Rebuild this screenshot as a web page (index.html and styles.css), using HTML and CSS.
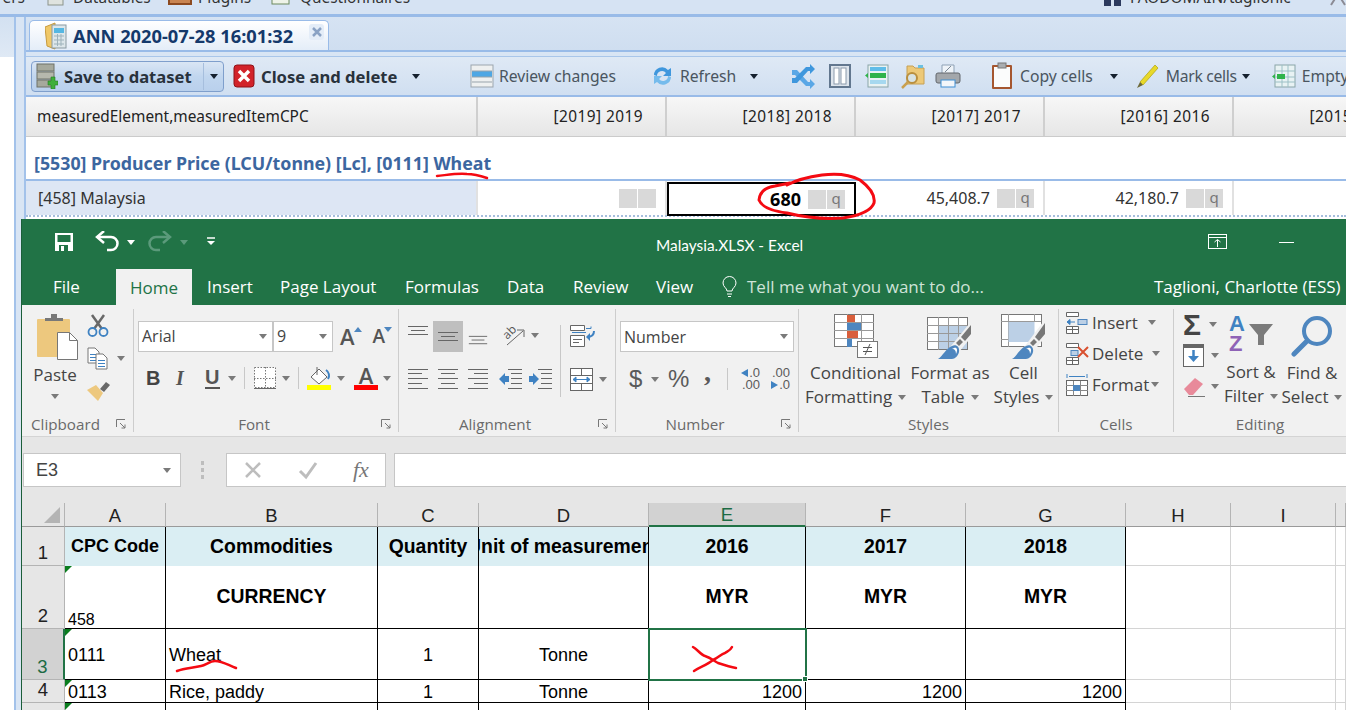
FILE: index.html
```html
<!DOCTYPE html>
<html lang="en">
<head>
<meta charset="utf-8">
<title>ANN 2020-07-28 - Malaysia.XLSX</title>
<link rel="stylesheet" href="styles.css">
</head>
<body>
<header class="topbar">
  <span class="tn tn-a">ers</span>
  <span class="tn tn-b"><svg width="17" height="14" viewBox="0 0 17 14"><rect x="1" y="0" width="15" height="13" fill="#dfe3df" stroke="#8b948b"/></svg>Datatables</span>
  <span class="tn tn-c"><svg width="24" height="14" viewBox="0 0 24 14"><rect x="1" y="0" width="22" height="12" fill="#c98552" stroke="#8d4a20" stroke-width="2"/></svg>Plugins</span>
  <span class="tn tn-d"><svg width="20" height="14" viewBox="0 0 20 14"><rect x="2" y="0" width="17" height="12" fill="#eef3e8" stroke="#6d8a5f"/></svg>Questionnaires</span>
  <span class="tn tn-e"><svg width="20" height="14" viewBox="0 0 20 14"><path d="M1 14V6h7v8zM11 14V6h7v8z" fill="#2c3a5e"/><circle cx="9.500" cy="3" r="3" fill="#2c3a5e"/></svg>FAODOMAIN/taglionic</span>
  <span class="tn tn-f"><svg width="16" height="14" viewBox="0 0 16 14"><path d="M1 13 8 2l7 11" fill="none" stroke="#8b8b95" stroke-width="2"/></svg></span>
</header>

<div class="shell">
  <aside class="west"><div class="west-head"></div></aside>
  <div class="splitter"></div>
  <main class="center">
    <div class="tabstrip">
      <div class="tab">
        <svg width="22" height="28" viewBox="0 0 22 28"><path d="M0 5 10 1v26L2 24z" fill="#f0c868" stroke="#c79a3e"/><rect x="7" y="3" width="14" height="23" fill="#dce6ea" stroke="#8a9aa2"/><rect x="9" y="6" width="10" height="5" fill="#55b7e2"/><path d="M9 14h10M9 18h10M9 22h10M12.500 12v12M16 12v12" stroke="#9db2bb"/></svg>
        <span class="tab-title">ANN 2020-07-28 16:01:32</span>
        <span class="tab-close"><svg width="10" height="10" viewBox="0 0 10 10"><path d="M1 1 9 9M9 1 1 9" stroke="#8aa2c4" stroke-width="2.500"/></svg></span>
      </div>
    </div>
    <div class="tabgap"></div>
    <div class="toolbar">
      <div class="savebtn">
        <svg width="22" height="26" viewBox="0 0 22 26"><rect x="1" y="1" width="17" height="7" fill="#a6a99c" stroke="#6f7268"/><rect x="1" y="9" width="17" height="7" fill="#b6b8ad" stroke="#6f7268"/><rect x="1" y="17" width="17" height="7" fill="#a6a99c" stroke="#6f7268"/><path d="M15 14h4v4h3v4h-3v4h-4v-4h-3v-4h3z" fill="#3fae3a" stroke="#257d22" stroke-width=".6"/></svg>
        <span class="boldtxt sv">Save to dataset</span>
        <i class="btnsep"></i>
        <i class="tri-d dark"></i>
      </div>
      <svg class="m9" width="22" height="26" viewBox="0 0 22 26"><rect x="1" y="2" width="20" height="22" rx="3" fill="#d2232a" stroke="#8f1218"/><path d="M6 8 16 18M16 8 6 18" stroke="#fff" stroke-width="3.500"/></svg>
      <span class="boldtxt cd">Close and delete</span>
      <i class="tri-d dark m15"></i>
      <svg class="m50" width="24" height="26" viewBox="0 0 24 26"><rect x="1" y="2" width="22" height="22" fill="#eef0f0" stroke="#9ba5ad"/><rect x="2" y="8" width="20" height="6" fill="#4ea7e4"/><path d="M2 8h20M2 14h20M2 19h20" stroke="#98a3ab"/></svg>
      <span class="tbtxt t-review">Review changes</span>
      <svg class="m35" width="23" height="26" viewBox="0 0 23 26"><path d="M3 12a8 8 0 0 1 14-5l3-2v8h-8l3-3a5 5 0 0 0-9 3z" fill="#3f97dd"/><path d="M20 14a8 8 0 0 1-14 5l-3 2v-8h8l-3 3a5 5 0 0 0 9-3z" fill="#75bbec"/></svg>
      <span class="tbtxt t-refresh">Refresh</span>
      <i class="tri-d dark m15"></i>
      <svg class="m33" width="25" height="26" viewBox="0 0 25 26"><path d="M1 7h5l11 12h2v-3l5 5-5 5v-3h-4L4 12H1z" fill="#5aa7e6"/><path d="M1 20h5L17 8h2v3l5-5-5-5v3h-4L4 15H1z" fill="#3f97dd"/></svg>
      <svg class="m13" width="22" height="24" viewBox="0 0 22 24"><rect x="1" y="1" width="20" height="22" fill="#dde4ec" stroke="#62778f" stroke-width="2"/><rect x="5" y="4" width="5" height="16" fill="#fff" stroke="#8b9aab"/><rect x="12" y="4" width="5" height="16" fill="#fff" stroke="#8b9aab"/></svg>
      <svg class="m14" width="24" height="24" viewBox="0 0 24 24"><rect x="3" y="1" width="20" height="22" fill="#e8f2f3" stroke="#8aa5a8"/><rect x="5" y="3" width="16" height="4" fill="#60bde9"/><rect x="5" y="16" width="16" height="4" fill="#a6d8ef"/><rect x="5" y="9" width="16" height="5" fill="#2fb34a"/><path d="M0 11.500 3 9v5z" fill="#2fb34a"/></svg>
      <svg class="m12" width="24" height="26" viewBox="0 0 24 26"><path d="M6 3h6l2 2h9v16H6z" fill="#edc978" stroke="#c6a055"/><rect x="17" y="2" width="5" height="3" fill="#6cc0e0"/><circle cx="11" cy="15" r="5" fill="#d8e3e4" stroke="#b98f3f" stroke-width="2"/><path d="M7 19 1 25" stroke="#c9a050" stroke-width="2.500"/></svg>
      <svg class="m10" width="26" height="26" viewBox="0 0 26 26"><path d="M7 2h12v9H7z" fill="#eef3f8" stroke="#8ea1b5"/><path d="M10 9l6-6" stroke="#7c8894"/><rect x="1" y="10" width="24" height="10" rx="2" fill="#a3a7ab" stroke="#62676c"/><rect x="6" y="17" width="14" height="7" fill="#f3f6fa" stroke="#3f8fd4"/></svg>
      <svg class="m30" width="22" height="28" viewBox="0 0 22 28"><rect x="1" y="3" width="20" height="24" rx="1" fill="#a5562f"/><rect x="3" y="5" width="16" height="20" fill="#fbfcfc"/><rect x="7" y="1" width="8" height="5" fill="#a9adb0" stroke="#777"/></svg>
      <span class="tbtxt t-copy">Copy cells</span>
      <i class="tri-d dark m17"></i>
      <svg class="m18" width="23" height="26" viewBox="0 0 23 26"><path d="M4 19 19 2l3 3L7 22z" fill="#e8d92a" stroke="#b5a81a" stroke-width=".8"/><path d="M4 19 1 25l6-3z" fill="#6d6a3a"/></svg>
      <span class="tbtxt t-mark">Mark cells</span>
      <i class="tri-d dark m5"></i>
      <svg class="m22" width="24" height="24" viewBox="0 0 24 24"><rect x="3" y="1" width="20" height="22" fill="#e8f2f3" stroke="#8aa5a8"/><path d="M3 7h20M3 13h20M3 18h20M10 1v22M16 1v22" stroke="#9cc0c6"/><rect x="5" y="10" width="8" height="5" fill="#2fb34a"/><path d="M0 12.500 3 10v5z" fill="#2fb34a"/></svg>
      <span class="tbtxt t-empty">Empty</span>
    </div>
    <div class="bluebar"></div>
    <div class="gridhead">
      <div class="gh gh-first">measuredElement,measuredItemCPC</div>
      <div class="gh">[2019] 2019</div>
      <div class="gh">[2018] 2018</div>
      <div class="gh">[2017] 2017</div>
      <div class="gh">[2016] 2016</div>
      <div class="gh">[2015] 2015</div>
    </div>
    <div class="grouprow">[5530] Producer Price (LCU/tonne) [Lc], [0111] Wheat</div>
    <div class="bluebar"></div>
    <div class="datarow">
      <div class="dc dc-first">[458] Malaysia</div>
      <div class="dc"><i class="flag"></i><i class="flag"></i></div>
      <div class="dc dc-sel"><b>680</b><i class="flag fl-l"></i><i class="flag">q</i></div>
      <div class="dc">45,408.7<i class="flag fl-l"></i><i class="flag">q</i></div>
      <div class="dc">42,180.7<i class="flag fl-l"></i><i class="flag">q</i></div>
      <div class="dc">50,000.0</div>
    </div>
  </main>
</div>

<section class="excel">
  <div class="titlebar">
    <svg class="qa-save" width="20" height="20" viewBox="0 0 20 20"><path d="M1 1h18v18H1z" fill="#fff"/><rect x="3.500" y="3" width="13" height="7" fill="#217346"/><rect x="5" y="13" width="9" height="6" fill="#217346"/><rect x="7" y="14" width="3" height="5" fill="#fff"/></svg>
    <svg class="qa-undo" width="24" height="22" viewBox="0 0 24 22"><path d="M2 6h14a6 6 0 0 1 0 13h-4" fill="none" stroke="#fff" stroke-width="2.500"/><path d="M9 0 2 6l7 6" fill="none" stroke="#fff" stroke-width="2.500"/></svg>
    <i class="tri-d white qa-c1"></i>
    <svg class="qa-redo" width="24" height="22" viewBox="0 0 24 22"><path d="M22 6H8a6 6 0 0 0 0 13h4" fill="none" stroke="#5b9a7b" stroke-width="2.500"/><path d="M15 0l7 6-7 6" fill="none" stroke="#5b9a7b" stroke-width="2.500"/></svg>
    <i class="tri-d faded qa-c2"></i>
    <svg class="qa-more" width="8" height="10" viewBox="0 0 8 10"><path d="M0 1h8" stroke="#fff" stroke-width="1.500"/><path d="M0 4h8L4 8z" fill="#fff"/></svg>
    <span class="doc-title">Malaysia.XLSX - Excel</span>
    <svg class="win-opt" width="20" height="16" viewBox="0 0 20 16"><rect x=".5" y=".5" width="18" height="14" fill="none" stroke="#fff"/><path d="M1 3.500h18M9.500 13V6M6.500 8l3-2.500 3 2.500" fill="none" stroke="#fff"/></svg>
    <i class="win-min"></i>
  </div>
  <nav class="tabs">
    <span class="rt rt-file">File</span>
    <span class="rt rt-home">Home</span>
    <span class="rt rt-insert">Insert</span>
    <span class="rt rt-page">Page Layout</span>
    <span class="rt rt-form">Formulas</span>
    <span class="rt rt-data">Data</span>
    <span class="rt rt-rev">Review</span>
    <span class="rt rt-view">View</span>
    <svg class="bulb" width="15" height="22" viewBox="0 0 15 22"><path d="M5 15c0-3-4-4-4-8a6.500 6.500 0 0 1 13 0c0 4-4 5-4 8z" fill="none" stroke="#fff"/><path d="M5 18h5M6 20.500h3" stroke="#fff"/></svg>
    <span class="rt tell">Tell me what you want to do...</span>
    <span class="rt user">Taglioni, Charlotte (ESS)</span>
  </nav>

  <div class="ribbon">
    <div class="group g-clip">
      <div class="gbody clip-body">
        <div class="paste">
          <svg width="42" height="46" viewBox="0 0 42 46"><rect x="0" y="5" width="33" height="38" rx="1" fill="#edc87e"/><path d="M8 7V4h6V0h6v4h6v3z" fill="#787878"/><path d="M20.500 18.500h12l8 8v19h-20z" fill="#fff" stroke="#767676"/><path d="M32.500 18.500v8h8" fill="none" stroke="#767676"/></svg>
          <span class="paste-t">Paste</span>
          <i class="tri-d gray paste-c"></i>
        </div>
        <div class="clip-small">
          <svg width="22" height="23" viewBox="0 0 22 23"><path d="M5 1l10 14M17 1 7 15" stroke="#686868" stroke-width="2.500"/><circle cx="5.500" cy="18" r="4" fill="none" stroke="#3f82c2" stroke-width="1.800"/><circle cx="16.500" cy="18" r="4" fill="none" stroke="#3f82c2" stroke-width="1.800"/></svg>
          <div class="copyrow">
            <svg width="21" height="23" viewBox="0 0 21 23"><path d="M1 1h7l4 4v11H1z" fill="#fff" stroke="#767676"/><path d="M3 7.500h6M3 10.500h6M3 13.500h6" stroke="#3f82c2"/><path d="M9 7h7l4 4v11H9z" fill="#fff" stroke="#767676"/><path d="M11 13.500h7M11 16.500h7M11 19.500h7" stroke="#3f82c2"/></svg>
            <i class="tri-d gray m9"></i>
          </div>
          <svg width="24" height="22" viewBox="0 0 24 22"><path d="M0 10 9 5l7 8-5 8z" fill="#edc87e"/><path d="M13 9l6-7 4 3-6 7z" fill="#686868"/></svg>
        </div>
      </div>
      <div class="glabel"><span>Clipboard</span><svg class="launch" width="10" height="10" viewBox="0 0 10 10"><path d="M.5 8V.5H9M4 4l5 5M9 5.500V9H5.500" fill="none" stroke="#777"/></svg></div>
    </div>

    <div class="group g-font">
      <div class="gbody font-body">
        <div class="frow1">
          <div class="field f-name">Arial<i class="tri-d gray"></i></div>
          <div class="field f-size">9<i class="tri-d gray"></i></div>
          <span class="growa">A<i class="tri-u blue"></i></span>
          <span class="growb">A<i class="tri-d blue"></i></span>
        </div>
        <div class="frow2">
          <b class="fb">B</b>
          <i class="fi">I</i>
          <span class="fu">U</span>
          <i class="tri-d gray m8"></i>
          <i class="vsep s-a"></i>
          <svg class="m9" width="22" height="22" viewBox="0 0 22 22"><rect x=".5" y=".5" width="21" height="20" fill="#fff" stroke="#777" stroke-dasharray="1.500 1.500"/><path d="M11.500 0v20M0 11.500h22" stroke="#777" stroke-dasharray="1.500 1.500"/><path d="M0 21.500h22" stroke="#666"/></svg>
          <i class="tri-d gray m6"></i>
          <i class="vsep s-b"></i>
          <span class="fillcol">
            <svg width="24" height="19" viewBox="0 0 24 19"><path d="M12 3 20 11l-8 7-8-7z" fill="#fff" stroke="#666"/><path d="M10 1v8" stroke="#666"/><path d="M19 4c3 2 4 6 2 9" fill="none" stroke="#3f82c2" stroke-width="2"/></svg>
            <i class="bar-y"></i>
          </span>
          <i class="tri-d gray m6"></i>
          <span class="colora">A<i class="bar-r"></i></span>
          <i class="tri-d gray m5"></i>
        </div>
      </div>
      <div class="glabel"><span>Font</span><svg class="launch" width="10" height="10" viewBox="0 0 10 10"><path d="M.5 8V.5H9M4 4l5 5M9 5.500V9H5.500" fill="none" stroke="#777"/></svg></div>
    </div>

    <div class="group g-align">
      <div class="gbody align-body">
        <div class="al-left">
          <div class="arow1">
            <svg class="alg t" width="20" height="12" viewBox="0 0 20 12"><path d="M0 1.500h20M3 5.500h14M0 9.500h20" stroke="#666"/></svg>
            <span class="al-on"><svg width="20" height="12" viewBox="0 0 20 12"><path d="M0 1.500h20M3 5.500h14M0 9.500h20" stroke="#666"/></svg></span>
            <svg class="alg b" width="20" height="12" viewBox="0 0 20 12"><path d="M0 1.500h20M3 5.500h14M0 9.500h20" stroke="#666"/></svg>
            <svg class="orient" width="24" height="24" viewBox="0 0 24 24"><text x="1" y="13" transform="rotate(-45 8 10)" class="svgtxt">ab</text><path d="M5 22 21 8M15 7h7v7" fill="none" stroke="#666"/></svg>
            <i class="tri-d gray m5"></i>
          </div>
          <div class="arow2">
            <svg width="20" height="22" viewBox="0 0 20 22"><path d="M0 1.500h20M0 5.500h14M0 10.500h20M0 15.500h14M0 20.500h20" stroke="#666"/></svg>
            <svg width="20" height="22" viewBox="0 0 20 22"><path d="M0 1.500h20M3 5.500h14M0 10.500h20M3 15.500h14M0 20.500h20" stroke="#666"/></svg>
            <svg width="20" height="22" viewBox="0 0 20 22"><path d="M0 1.500h20M6 5.500h14M0 10.500h20M6 15.500h14M0 20.500h20" stroke="#666"/></svg>
            <svg class="ai1" width="23" height="22" viewBox="0 0 23 22"><path d="M9 1.500h14M12 5.500h11M12 10.500h11M12 15.500h11M9 20.500h14" stroke="#666"/><path d="M0 11 6 5v3h4v6H6v3z" fill="#3f82c2"/></svg>
            <svg class="ai2" width="23" height="22" viewBox="0 0 23 22"><path d="M9 1.500h14M12 5.500h11M12 10.500h11M12 15.500h11M9 20.500h14" stroke="#666"/><path d="M10 11 4 5v3H0v6h4v3z" fill="#3f82c2"/></svg>
          </div>
        </div>
        <i class="vsep s-c"></i>
        <div class="al-right">
          <svg width="26" height="22" viewBox="0 0 26 22"><path d="M.5.500h14v5H.5zM.5 10.500h14v11H.5zM3 14.500h9M3 17.500h6" fill="#fff" stroke="#666"/><path d="M16 3.500h5v-2M2 7.500h14" fill="none" stroke="#3f82c2"/><path d="M24 6c0 4-2 6-7 6" fill="none" stroke="#3f82c2" stroke-width="2"/><path d="M20 8l-4 4 4 4z" fill="#3f82c2"/></svg>
          <div class="mergerow">
            <svg width="23" height="23" viewBox="0 0 23 23"><rect x=".5" y=".5" width="22" height="22" fill="#fff" stroke="#666"/><path d="M0 7.500h23M0 15.500h23M11.500 0v7M11.500 16v7" stroke="#666"/><path d="M3 11.500h17M3 11.500l3-2.500v5zM20 11.500l-3-2.500v5z" stroke="#3f82c2" fill="#3f82c2"/></svg>
            <i class="tri-d gray m6"></i>
          </div>
        </div>
      </div>
      <div class="glabel"><span>Alignment</span><svg class="launch" width="10" height="10" viewBox="0 0 10 10"><path d="M.5 8V.5H9M4 4l5 5M9 5.500V9H5.500" fill="none" stroke="#777"/></svg></div>
    </div>

    <div class="group g-num">
      <div class="gbody num-body">
        <div class="field f-num">Number<i class="tri-d gray"></i></div>
        <div class="nrow">
          <span class="nsym dollar">$</span><i class="tri-d gray m9"></i>
          <span class="nsym pct">%</span>
          <span class="nsym comma">,</span>
          <i class="vsep s-d"></i>
          <span class="dec d1"><span><i class="tri-l"></i>.0</span><span>.00</span></span>
          <span class="dec d2"><span>.00</span><span><i class="tri-r"></i>.0</span></span>
        </div>
      </div>
      <div class="glabel"><span>Number</span><svg class="launch" width="10" height="10" viewBox="0 0 10 10"><path d="M.5 8V.5H9M4 4l5 5M9 5.500V9H5.500" fill="none" stroke="#777"/></svg></div>
    </div>

    <div class="group g-styles">
      <div class="gbody sty-body">
        <div class="big b-cond">
          <svg width="46" height="46" viewBox="0 0 46 46"><rect x=".5" y=".5" width="39" height="32" fill="#fff" stroke="#777"/><path d="M0 8.500h40M0 16.500h40M0 24.500h40M13.500 0v33M27.500 0v33" stroke="#999"/><rect x="13" y="1" width="8" height="7" fill="#d95f3c"/><rect x="13" y="9" width="14" height="7" fill="#4e86bf"/><rect x="13" y="17" width="11" height="7" fill="#d95f3c"/><rect x="13" y="25" width="5" height="8" fill="#4e86bf"/><rect x="23.500" y="27.500" width="20" height="16" fill="#fff" stroke="#777"/><path d="M29 33.500h9M29 37.500h9M36 30l-5 11" stroke="#555"/></svg>
          <span class="bigt">Conditional</span><span class="bigt">Formatting<i class="tri-d gray m6"></i></span>
        </div>
        <div class="big b-table">
          <svg width="46" height="46" viewBox="0 0 46 46"><rect x=".5" y="3.500" width="40" height="32" fill="#fff" stroke="#777"/><rect x="11" y="11" width="29" height="24" fill="#bcd0e6"/><path d="M0 11.500h40M0 19.500h40M0 27.500h40M11.500 3v33M21.500 3v33M31.500 3v33" stroke="#999"/><path d="M24 32 42 10l4 3v8L32 38l-8 8H9z" fill="#f1f1f1"/><path d="M44 11v9l-6 7-4-4zM33 25l3 3-4 4-3-3z" fill="#777"/><path d="M11 45c5-3 8-11 14-13 4-2 8 1 7 6-1 4-4 7-7 7z" fill="#4e86bf"/><path d="M27 34c3-1 4 2 2 6 0-3-1-5-4-5z" fill="#fff"/></svg>
          <span class="bigt">Format as</span><span class="bigt">Table<i class="tri-d gray m6"></i></span>
        </div>
        <div class="big b-cell">
          <svg width="46" height="46" viewBox="0 0 46 46"><rect x=".5" y=".5" width="40" height="32" fill="#fff" stroke="#777"/><path d="M0 7.500h40M7.500 0v33M0 25.500h8M33.500 0v8" stroke="#999"/><rect x="7.500" y="8" width="26" height="20" fill="#bcd0e6"/><path d="M24 32 42 8l4 3v10L32 38l-8 8H9z" fill="#f1f1f1"/><path d="M44 9v11l-6 7-4-4zM33 25l3 3-4 4-3-3z" fill="#777"/><path d="M11 45c5-3 8-11 14-13 4-2 8 1 7 6-1 4-4 7-7 7z" fill="#4e86bf"/><path d="M27 34c3-1 4 2 2 6 0-3-1-5-4-5z" fill="#fff"/></svg>
          <span class="bigt">Cell</span><span class="bigt">Styles<i class="tri-d gray m6"></i></span>
        </div>
      </div>
      <div class="glabel"><span>Styles</span></div>
    </div>

    <div class="group g-cells">
      <div class="gbody cel-body">
        <div class="crow">
          <svg width="22" height="22" viewBox="0 0 22 22"><path d="M.5.500h12v4H.5zM.5 14.500h12v7H.5zM6.500 14v8M.5 17.500h12" fill="#fff" stroke="#666"/><rect x="12" y="7.500" width="9" height="5" fill="#bcd0e6" stroke="#4e86bf"/><path d="M1 10h8M1 10l3-2.500v5z" stroke="#3f82c2" fill="#3f82c2"/></svg>
          <span>Insert</span><i class="tri-d gray cr1"></i>
        </div>
        <div class="crow">
          <svg width="24" height="22" viewBox="0 0 24 22"><path d="M.5.500h12v4H.5zM.5 14.500h12v7H.5zM6.500 14v8M.5 17.500h12" fill="#fff" stroke="#666"/><rect x="5" y="7.500" width="7" height="5" fill="#bcd0e6" stroke="#4e86bf"/><path d="M12 4l10 10M22 4 12 14" stroke="#d9502f" stroke-width="2"/></svg>
          <span class="del">Delete</span><i class="tri-d gray cr2"></i>
        </div>
        <div class="crow">
          <svg width="22" height="24" viewBox="0 0 22 24"><path d="M1 1v4M21 1v4M3 3.500h16" stroke="#3f82c2"/><rect x=".5" y="7.500" width="21" height="15" fill="#fff" stroke="#666"/><path d="M0 12.500h22M0 17.500h22M7.500 8v15M14.500 8v15" stroke="#888"/><rect x="7" y="12" width="7" height="6" fill="#4e86bf"/></svg>
          <span>Format</span><i class="tri-d gray cr3"></i>
        </div>
      </div>
      <div class="glabel"><span>Cells</span></div>
    </div>

    <div class="group g-edit">
      <div class="gbody edit-body">
        <div class="ed-small">
          <div class="esr"><span class="sigma">Σ</span><i class="tri-d gray m6"></i></div>
          <div class="esr"><svg width="21" height="23" viewBox="0 0 21 23"><rect x=".5" y=".5" width="20" height="22" fill="#fff" stroke="#666"/><rect x="0" y="0" width="21" height="4" fill="#666"/><path d="M10.500 6v10" stroke="#3f82c2" stroke-width="2.500"/><path d="M5 12l5.500 6 5.500-6z" fill="#3f82c2"/></svg><i class="tri-d gray m7"></i></div>
          <div class="esr"><svg width="22" height="20" viewBox="0 0 22 20"><path d="M1 12 12 1l8 6-10 11H6z" fill="#e88a9a"/><path d="M5 19.500h17" stroke="#777"/></svg><i class="tri-d gray m6"></i></div>
        </div>
        <div class="big b-sort">
          <div class="sorticon"><span class="az"><span class="a">A</span><span class="z">Z</span></span><svg width="24" height="22" viewBox="0 0 24 22"><path d="M0 0h24l-9 11v10H9V11z" fill="#7b7b7b"/></svg></div>
          <span class="bigt">Sort &amp;</span><span class="bigt">Filter<i class="tri-d gray m6"></i></span>
        </div>
        <div class="big b-find">
          <svg width="42" height="42" viewBox="0 0 42 42"><circle cx="26" cy="16" r="13" fill="none" stroke="#4e86bf" stroke-width="4"/><path d="M16 26 3 39" stroke="#4e86bf" stroke-width="5" stroke-linecap="round"/></svg>
          <span class="bigt">Find &amp;</span><span class="bigt">Select<i class="tri-d gray m6"></i></span>
        </div>
      </div>
      <div class="glabel"><span>Editing</span></div>
    </div>
  </div>

  <div class="formula">
    <div class="namebox">E3<i class="tri-d gray"></i></div>
    <span class="fdots"><i></i><i></i><i></i></span>
    <div class="fxbox">
      <svg width="20" height="20" viewBox="0 0 20 20"><path d="M3 3l14 14M17 3 3 17" stroke="#bdbdbd" stroke-width="2.500"/></svg>
      <svg width="20" height="20" viewBox="0 0 20 20"><path d="M2 11l6 6L18 3" fill="none" stroke="#bdbdbd" stroke-width="3"/></svg>
      <span class="fx">fx</span>
    </div>
    <div class="finput"></div>
  </div>

  <div class="sheet">
    <div class="hd corner"><svg width="16" height="16" viewBox="0 0 16 16"><path d="M16 0v16H0z" fill="#b4b4b4"/></svg></div>
    <div class="hd">A</div><div class="hd">B</div><div class="hd">C</div><div class="hd">D</div>
    <div class="hd hd-on">E</div><div class="hd">F</div><div class="hd">G</div><div class="hd">H</div><div class="hd">I</div><div class="hd"></div>

    <div class="rh">1</div>
    <div class="c h1 h1s">CPC Code</div><div class="c h1">Commodities</div><div class="c h1">Quantity</div><div class="c h1">Unit of measurement</div><div class="c h1">2016</div><div class="c h1">2017</div><div class="c h1">2018</div><div class="e"></div><div class="e"></div><div class="e"></div>

    <div class="rh">2</div>
    <div class="c l bot small tri">458</div><div class="c b">CURRENCY</div><div class="c"></div><div class="c"></div><div class="c b">MYR</div><div class="c b">MYR</div><div class="c b">MYR</div><div class="e"></div><div class="e"></div><div class="e"></div>

    <div class="rh rh-on">3</div>
    <div class="c l tri">0111</div><div class="c l">Wheat</div><div class="c">1</div><div class="c">Tonne</div><div class="c sel"><i class="handle"></i></div><div class="c"></div><div class="c"></div><div class="e"></div><div class="e"></div><div class="e"></div>

    <div class="rh">4</div>
    <div class="c l tri">0113</div><div class="c l">Rice, paddy</div><div class="c">1</div><div class="c">Tonne</div><div class="c r">1200</div><div class="c r">1200</div><div class="c r">1200</div><div class="e"></div><div class="e"></div><div class="e"></div>

    <div class="rh"></div>
    <div class="c tri"></div><div class="c"></div><div class="c"></div><div class="c"></div><div class="c"></div><div class="c"></div><div class="c"></div><div class="e"></div><div class="e"></div><div class="e"></div>
  </div>
</section>

<svg class="ink" width="1346" height="710" viewBox="0 0 1346 710" aria-hidden="true">
  <g fill="none" stroke="#f40a12" stroke-width="2.500" stroke-linecap="round" stroke-linejoin="round">
    <path d="M437 176c10-1 20-3 30-2 8 0 14 2 20 4"/>
    <path class="ink-ring" d="M787 185Q800 178 822 175Q845 172 860 180Q876 192 874 203Q870 214 843 218Q815 220 787 213Q763 210 759 200Q760 188 775 186L790 183"/>
    <path d="M177 671c8-3 16-3 24-5 5-1 9-5 14-5 7 0 13 4 21 7"/>
    <path d="M693 647c4 2 8 8 12 9 6 2 9 5 13 7 6 2 12 4 18 5"/>
    <path d="M694 671c6-4 13-6 19-11 5-2 8-6 12-7 3-2 5-2 7-6"/>
  </g>
</svg>
</body>
</html>
```

FILE: styles.css
```css
* { box-sizing: border-box; }
html, body { margin: 0; padding: 0; }
body {
  width: 1346px; height: 710px; overflow: hidden; position: relative;
  background: #fff; font-family: "Noto Sans", "Liberation Sans", sans-serif; color: #222;
}
i { font-style: normal; }
svg { flex: none; display: block; }

/* carets */
.tri-d, .tri-u { display: inline-block; width: 0; height: 0; border-left: 4px solid transparent; border-right: 4px solid transparent; flex: none; }
.tri-d { border-top: 5px solid #777; }
.tri-u { border-bottom: 5px solid #4e86bf; }
.tri-d.dark { border-top-color: #15202e; }
.tri-d.gray { border-top-color: #7a7a7a; }
.tri-d.white { border-top-color: #fff; }
.tri-d.faded { border-top-color: #5b9a7b; }
.tri-d.blue { border-top-color: #4e86bf; }
.m5 { margin-left: 5px; } .m6 { margin-left: 6px; } .m8 { margin-left: 8px; }
.m9 { margin-left: 9px; } .m10 { margin-left: 10px; } .m12 { margin-left: 12px; }
.m13 { margin-left: 13px; } .m14 { margin-left: 14px; } .m15 { margin-left: 15px; } .m17 { margin-left: 17px; }
.m18 { margin-left: 18px; } .m22 { margin-left: 22px; } .m30 { margin-left: 30px; } .m33 { margin-left: 33px; }
.m35 { margin-left: 35px; } .m50 { margin-left: 50px; } .m7 { margin-left: 7px; }

/* web app behind */
.topbar { height: 17px; border-bottom: 3px solid #99bbe8; background: #d6e3f3; display: flex; align-items: flex-end; overflow: hidden; font-size: 15.400px; color: #333; }
.tn { display: flex; align-items: flex-end; height: 14px; line-height: 14px; white-space: nowrap; flex: none; transform: translateY(-9px); }
.tn svg { transform: translateY(1px); }
.tn-a { width: 47px; justify-content: flex-end; padding-right: 22px; }
.tn-b { width: 121px; gap: 9px; }
.tn-c { width: 102px; gap: 6px; }
.tn-d { width: 833px; gap: 10px; }
.tn-e { width: 227px; gap: 7px; }

.shell { display: flex; height: 693px; }
.west { width: 14px; background: #fff; }
.west-head { height: 40px; background: linear-gradient(#d3e1f1, #dfe9f5); }
.splitter { width: 12px; background: #d9e5f4; border-left: 2px solid #a3c2ea; border-right: 2px solid #a3c2ea; }
.center { flex: 1; min-width: 0; overflow: hidden; display: flex; flex-direction: column; }

.tabstrip { height: 33px; padding: 3px 0 0 3px; background: linear-gradient(#d6e3f3, #cfdef0); }
.tab { width: 300px; height: 30px; display: flex; align-items: center; padding-left: 15px; border: 1px solid #99bbe8; border-bottom: 0; border-radius: 5px 5px 0 0; background: linear-gradient(#fff, #e4edf8); }
.tab-title { margin-left: 6px; width: 221px; font-weight: 700; font-size: 18.300px; color: #15396b; white-space: nowrap; }
.tab-close { margin-left: 15px; width: 15px; height: 16px; margin-top: -8px; border-radius: 3px; background: #e4edf8; display: flex; align-items: center; justify-content: center; }
.tabgap { height: 7px; border-top: 2px solid #99bbe8; background: #d9e5f4; border-bottom: 1px solid #a9c6ea; }
.toolbar { height: 38px; display: flex; align-items: center; padding-left: 5px; background: linear-gradient(#dfe9f5, #d0dff1); white-space: nowrap; color: #4a5560; font-size: 15.700px; overflow: hidden; }
.savebtn { width: 193px; height: 31px; flex: none; display: flex; align-items: center; padding-left: 4px; border: 1px solid #7f9fcc; border-radius: 4px; background: linear-gradient(#dae6f4, #c1d6ef 50%, #b9d0ec); }
.boldtxt { font-weight: 700; color: #29323c; font-size: 16.600px; }
.sv { margin-left: 6px; width: 131px; }
.btnsep { width: 1px; height: 27px; margin: 0 6px 0 8px; background: #a6bedd; }
.cd { margin-left: 6px; width: 136px; }
.tbtxt { margin-left: 6px; }
.t-review { margin-left: 5px; width: 118px; } .t-refresh { width: 55px; } .t-copy { margin-left: 7px; width: 73px; } .t-mark { margin-left: 7px; width: 71px; letter-spacing: -.3px; }
.bluebar { height: 2px; flex: none; background: #99bbe8; }

.gridhead { height: 40px; flex: none; display: grid; grid-template-columns: 452px repeat(5, 189px); background: linear-gradient(#f7f7f7, #e6e6e6); border-bottom: 1px solid #cbcbcb; font-size: 15.400px; color: #222; white-space: nowrap; }
.gh { display: flex; align-items: center; justify-content: flex-end; padding-right: 22px; border-right: 2px solid #cfcfcf; letter-spacing: .45px; }
.gh-first { justify-content: flex-start; padding-left: 11px; letter-spacing: 0; }
.grouprow { height: 42px; flex: none; padding: 15px 0 0 8px; font-weight: 700; font-size: 17.800px; line-height: 22px; color: #3c66a0; background: #fff; white-space: nowrap; }
.datarow { height: 36px; flex: none; display: grid; grid-template-columns: 452px repeat(5, 189px); border-bottom: 2px dotted #a6bedd; font-size: 16px; white-space: nowrap; }
.dc { display: flex; align-items: center; justify-content: flex-end; gap: 1px; padding-right: 9px; border-right: 2px solid #e1e1e1; color: #333; overflow: hidden; }
.dc-first { background: #dde6f4; justify-content: flex-start; padding-left: 12px; }
.dc-sel { border: 2px solid #000; color: #000; padding-right: 9px; margin: 1px 0 -1px; }
.dc-sel b { font-size: 18px; }
.flag { display: block; width: 18px; height: 19px; background: #d9d9d9; font-size: 15px; line-height: 16px; text-align: center; color: #777; }
.fl-l { margin-left: 6px; }

/* Excel window */
.excel { position: absolute; left: 21px; top: 219px; width: 1325px; height: 491px; overflow: hidden; background: #f1f1f1; border-left: 1px solid #1b5e39; color: #444; font-family: "Open Sans", "Noto Sans", sans-serif; }
.titlebar { height: 49px; background: #217346; display: flex; align-items: center; color: #fff; padding-bottom: 3px; }
.qa-save { margin-left: 32px; }
.qa-undo { margin-left: 21px; }
.qa-c1 { margin-left: 8px; }
.qa-redo { margin-left: 13px; }
.qa-c2 { margin-left: 8px; }
.qa-more { margin-left: 19px; }
.doc-title { margin: 6px 0 0 441px; font-family: Lato, "Open Sans", sans-serif; font-size: 15.400px; width: 552px; white-space: nowrap; }
.win-min { margin-left: 51px; width: 15px; height: 1px; background: #fff; }

.tabs { height: 37px; background: #217346; display: flex; align-items: stretch; color: #fff; font-size: 17px; white-space: nowrap; }
.rt { display: flex; align-items: center; }
.rt-file { margin-left: 31px; width: 63px; }
.rt-home { width: 76px; justify-content: center; background: #f1f1f1; color: #217346; margin-top: 1px; }
.rt-insert { margin-left: 15px; width: 73px; }
.rt-page { width: 125px; }
.rt-form { width: 102px; }
.rt-data { width: 66px; }
.rt-rev { width: 83px; }
.rt-view { width: 66px; }
.bulb { align-self: center; }
.tell { margin-left: 10px; width: 407px; color: #cfe3d8; }
.user { color: #fff; }

.ribbon { height: 132px; display: flex; background: #f1f1f1; border-bottom: 1px solid #d4d4d4; padding-top: 4px; }
.group { height: 123px; display: flex; flex-direction: column; border-right: 1px solid #cdcdcd; flex: none; }
.gbody { flex: 1; min-height: 0; display: flex; }
.glabel { height: 24px; padding-top: 7px; display: flex; align-items: center; font-size: 15.200px; color: #6a6a6a; white-space: nowrap; }
.glabel span { margin: 0 auto; }
.launch { margin: 0 7px; }
.g-clip { width: 112px; } .g-font { width: 265px; } .g-align { width: 217px; } .g-num { width: 183px; } .g-styles { width: 260px; } .g-cells { width: 115px; } .g-edit { flex: 1; border-right: 0; }

.clip-body { padding: 5px 0 0 15px; }
.paste { width: 42px; display: flex; flex-direction: column; align-items: center; }
.paste-t { margin: 4px 0 0 -6px; font-size: 17px; line-height: 21px; }
.paste-c { margin: 9px 0 0 -6px; }
.clip-small { margin-left: 8px; display: flex; flex-direction: column; gap: 10px; }
.copyrow { display: flex; align-items: center; }

.font-body { flex-direction: column; padding: 12px 0 0 4px; }
.frow1 { display: flex; align-items: center; height: 30px; }
.field { height: 31px; background: #fff; border: 1px solid #c6c6c6; display: flex; align-items: center; justify-content: space-between; padding: 0 5px 0 3px; font-size: 16px; color: #444; }
.f-name { width: 135px; }
.f-size { width: 60px; }
.growa, .growb { display: flex; align-items: flex-start; font-weight: 600; color: #555; line-height: 24px; }
.growa { margin-left: 7px; font-size: 22px; }
.growb { margin-left: 11px; font-size: 19px; }
.growa .tri-u, .growb .tri-d { margin: 3px 0 0 -1px; }
.frow2 { display: flex; align-items: center; height: 24px; margin-top: 15px; padding-left: 8px; }
.fb { width: 14px; font-size: 20px; line-height: 24px; font-family: "Liberation Sans", sans-serif; color: #444; }
.fi { margin-left: 16px; width: 12px; font-size: 20px; font-style: italic; font-weight: 700; font-family: "Liberation Serif", serif; color: #555; }
.fu { margin-left: 17px; width: 15px; font-size: 20px; font-weight: 700; line-height: 20px; border-bottom: 2px solid #555; font-family: "Liberation Sans", sans-serif; color: #555; }
.vsep { display: block; width: 1px; background: #c8c8c8; flex: none; }
.s-a { height: 22px; margin-left: 8px; }
.s-b { height: 22px; margin-left: 8px; }
.fillcol { margin-left: 8px; width: 24px; display: flex; flex-direction: column; }
.bar-y { display: block; height: 5px; background: #ffff00; }
.colora { margin-left: 9px; width: 24px; display: flex; flex-direction: column; align-items: center; font-size: 22px; line-height: 19px; font-weight: 600; color: #555; }
.bar-r { display: block; width: 24px; height: 5px; background: #ff0000; }

.align-body { padding: 12px 0 0 9px; }
.al-left { width: 152px; }
.arow1 { display: flex; height: 31px; align-items: flex-start; }
.alg.t { margin-top: 4px; }
.al-on { width: 30px; height: 31px; margin-left: 5px; background: #bfbfbf; display: flex; align-items: center; justify-content: center; }
.alg.b { margin: 14px 0 0 5px; }
.orient { margin: 2px 0 0 14px; }
.arow1 .tri-d { margin-top: 12px; }
.svgtxt { font-size: 12px; fill: #555; }
.arow2 { display: flex; margin-top: 16px; gap: 10px; }
.ai1 { margin-left: 1px; }
.ai2 { margin-left: -3px; }
.s-c { height: 72px; margin-top: 4px; }
.al-right { margin-left: 9px; display: flex; flex-direction: column; gap: 21px; padding-top: 4px; }
.mergerow { display: flex; align-items: center; }

.num-body { flex-direction: column; padding: 12px 0 0 4px; }
.f-num { width: 174px; }
.nrow { display: flex; align-items: center; height: 30px; margin-top: 12px; padding-left: 9px; color: #5a5a5a; }
.nsym { font-family: "Liberation Sans", sans-serif; }
.dollar { font-size: 24px; width: 13px; }
.pct { margin-left: 9px; font-size: 24px; width: 21px; }
.comma { margin-left: 15px; font-size: 28px; font-weight: 700; width: 9px; line-height: 20px; margin-top: -14px; font-family: "Liberation Serif", serif; }
.s-d { height: 22px; margin-left: 14px; }
.dec { display: flex; flex-direction: column; align-items: flex-end; font-size: 13px; line-height: 12px; font-family: "Liberation Sans", sans-serif; width: 23px; }
.dec span { display: flex; align-items: center; gap: 1px; }
.d1 { margin-left: 9px; }
.d2 { margin-left: 7px; }
.tri-l, .tri-r { display: block; width: 0; height: 0; border-top: 4px solid transparent; border-bottom: 4px solid transparent; }
.tri-l { border-right: 7px solid #3f82c2; }
.tri-r { border-left: 7px solid #3f82c2; }

.sty-body { padding-top: 5px; }
.big { display: flex; flex-direction: column; align-items: center; flex: none; }
.big > svg { margin-bottom: 1px; }
.bigt { display: flex; align-items: center; font-size: 17px; line-height: 24px; white-space: nowrap; color: #444; }
.b-cond { margin-left: 8px; width: 97px; }
.b-cond > svg { margin-left: 3px; }
.b-table { margin-left: 6px; width: 80px; }
.b-cell { margin-left: 7px; width: 53px; }

.cel-body { flex-direction: column; padding: 0 0 0 7px; margin-top: -2px; }
.crow { height: 31px; display: flex; align-items: center; font-size: 17px; color: #444; white-space: nowrap; }
.crow span { margin-left: 4px; }
.crow .del { margin-left: 2px; }
.cr1 { margin-left: 10px; }
.cr2 { margin-left: 9px; }
.cr3 { margin-left: 2px; }

.edit-body { padding: 5px 0 0 9px; }
.ed-small { width: 34px; margin-top: -5px; display: flex; flex-direction: column; }
.esr { height: 31px; display: flex; align-items: center; }
.sigma { font-size: 30px; width: 21px; line-height: 26px; font-weight: 600; color: #444; font-family: "Liberation Sans", sans-serif; }
.b-sort { margin-left: 7px; width: 54px; }
.b-find { margin-left: 5px; width: 58px; }
.sorticon { display: flex; height: 47px; width: 44px; }
.az { display: flex; flex-direction: column; width: 20px; font-size: 22px; line-height: 20px; font-family: "Liberation Sans", sans-serif; }
.a { color: #3f82c2; font-weight: 700; }
.z { color: #8e62b6; font-weight: 700; }
.sorticon svg { margin-top: 10px; }
.b-find > svg { margin: 1px 0 4px; }

.formula { height: 66px; background: #e6e6e6; display: flex; align-items: flex-start; padding: 16px 0 0 1px; }
.namebox { width: 158px; height: 34px; background: #fff; border: 1px solid #c6c6c6; display: flex; align-items: center; justify-content: space-between; padding: 0 9px 0 12px; font-size: 18px; color: #444; font-family: "Liberation Sans", sans-serif; }
.fdots { margin: 8px 0 0 20px; width: 4px; display: flex; flex-direction: column; gap: 3px; }
.fdots i { display: block; width: 3px; height: 4px; background: #bdbdbd; }
.fxbox { margin-left: 21px; width: 160px; height: 34px; background: #fff; border: 1px solid #c6c6c6; display: flex; align-items: center; gap: 35px; padding-left: 16px; }
.fx { font-family: "Liberation Serif", serif; font-style: italic; font-size: 22px; color: #777; margin-left: 0; }
.finput { margin-left: 8px; flex: 1; height: 34px; background: #fff; border: 1px solid #c6c6c6; border-right: 0; }

.sheet { display: grid; grid-template-columns: 43px 101px 212px 101px 170px 157px 160px 160px 105px 105px 10px; grid-template-rows: 24px 39px 63px 51px 23px 10px; background: #fff; font-family: "Liberation Sans", sans-serif; color: #000; font-size: 18px; }
.hd { background: #e6e6e6; border-right: 1px solid #b4b4b4; border-bottom: 1px solid #9a9a9a; display: flex; align-items: center; justify-content: center; font-size: 18.500px; padding-top: 2px; color: #222; }
.corner { justify-content: flex-end; align-items: flex-end; padding: 0 4px 3px 0; }
.hd-on { background: #d2d2d2; color: #1c6b44; border-bottom: 2px solid #217346; }
.rh { background: #e6e6e6; border-right: 1px solid #b4b4b4; border-bottom: 1px solid #b4b4b4; display: flex; align-items: flex-end; justify-content: center; font-size: 18.500px; color: #222; line-height: 20px; padding-bottom: 2px; }
.rh-on { background: #d2d2d2; color: #1c6b44; border-right: 2px solid #217346; }
.c { position: relative; display: flex; align-items: center; justify-content: center; border-right: 1px solid #000; border-bottom: 1px solid #000; white-space: nowrap; overflow: hidden; padding-top: 2px; }
.e { border-right: 1px solid #d4d4d4; border-bottom: 1px solid #d4d4d4; }
.h1 { background: #daeef3; font-weight: 700; font-size: 19.400px; border-bottom: 0; padding-top: 0; }
.h1s { font-size: 18px; }
.b { font-weight: 700; font-size: 19.400px; padding-top: 0; padding-bottom: 1px; }
.l { justify-content: flex-start; padding-left: 3px; }
.r { justify-content: flex-end; padding-right: 3px; }
.bot { align-items: flex-end; }
.small { font-size: 16px; line-height: 16px; }
.tri::before { content: ""; position: absolute; left: 0; top: 0; border-top: 7px solid #0a7d1e; border-right: 7px solid transparent; }
.sel { overflow: visible; outline: 2px solid #217346; outline-offset: -1px; z-index: 1; }
.handle { position: absolute; right: -3px; bottom: -3px; width: 6px; height: 6px; background: #217346; border: 1px solid #fff; }

.ink { position: absolute; left: 0; top: 0; pointer-events: none; }
.ink-ring { stroke-width: 3; }
```
